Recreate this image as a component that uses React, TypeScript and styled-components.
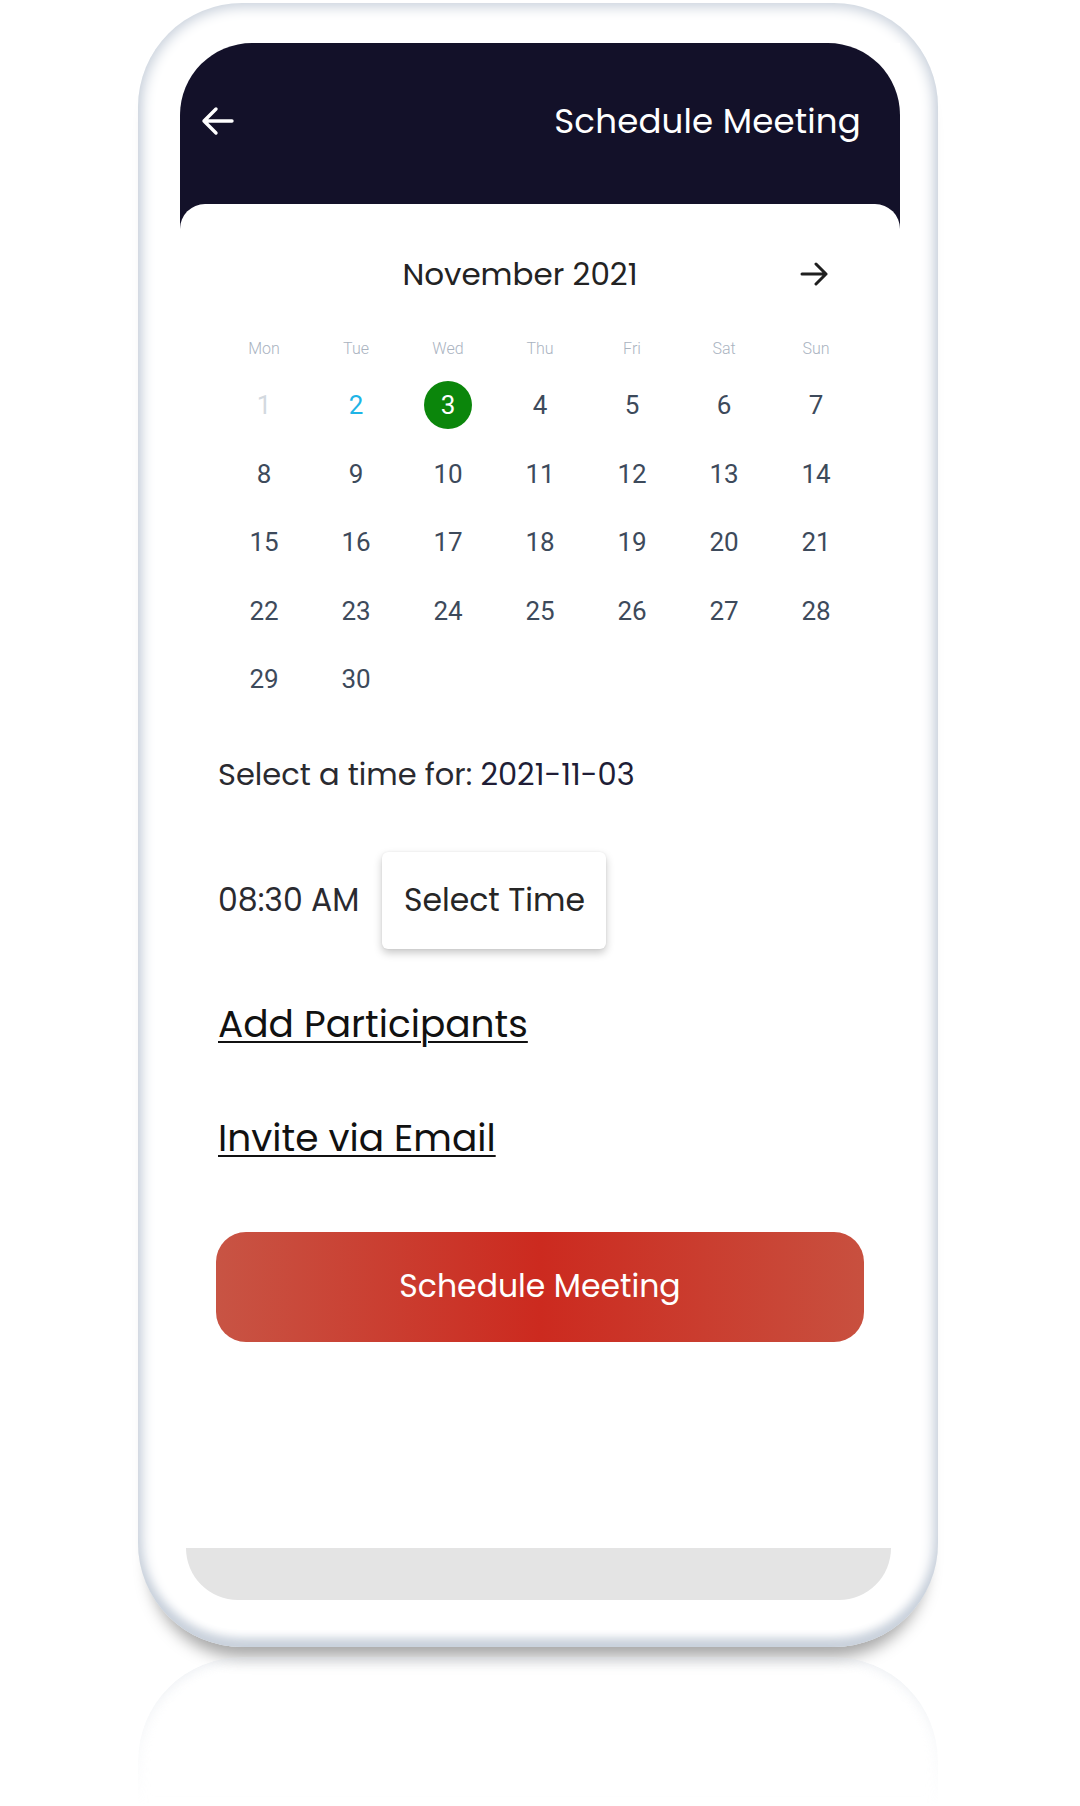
import React from 'react';
import styled, { createGlobalStyle } from 'styled-components';

const GlobalStyle = createGlobalStyle`
  html, body {
    margin: 0;
    padding: 0;
    background: #ffffff;
  }
  body {
    font-family: 'Poppins', 'Inter', 'Liberation Sans', sans-serif;
  }
  * {
    box-sizing: border-box;
  }
`;

const Page = styled.div`
  width: 1080px;
  height: 1806px;
  padding-top: 3px;
  overflow: hidden;
  background: #ffffff;
`;

const Phone = styled.div`
  width: 800px;
  height: 1644px;
  margin: 0 0 0 138px;
  padding: 40px 38px 47px 42px;
  border-radius: 104px;
  background: #ffffff;
  display: flex;
  flex-direction: column;
  box-shadow: inset 0 0 13px 4px #c8d0db, inset 0 -10px 10px -2px #cdd5df,
    0 22px 16px -12px rgba(0, 0, 0, 0.35);
`;

const Screen = styled.div`
  flex: 1;
  display: flex;
  flex-direction: column;
  background: #ffffff;
`;

const Header = styled.div`
  height: 186px;
  padding: 58px 39px 0 21px;
  display: flex;
  align-items: flex-start;
  justify-content: space-between;
  background: #131129;
  border-radius: 72px 72px 0 0;
`;

const HeaderRow = styled.div`
  height: 40px;
  display: flex;
  align-items: center;
`;

const Title = styled.h1`
  margin: 0;
  font-size: 34px;
  font-weight: 400;
  color: #ffffff;
  letter-spacing: 0.2px;
`;

const Card = styled.div`
  flex: 1;
  margin-top: -25px;
  padding: 0 38px;
  background: #ffffff;
  border-radius: 25px 25px 0 0;
  display: flex;
  flex-direction: column;
`;

const MonthRow = styled.div`
  height: 40px;
  margin-top: 50px;
  padding: 0 34px 0 22px;
  display: flex;
  align-items: center;
`;

const MonthLabel = styled.div`
  flex: 1;
  text-align: center;
  font-size: 31px;
  color: #232323;
`;

const WeekGrid = styled.div`
  display: grid;
  grid-template-columns: repeat(7, 92px);
  height: 30px;
  margin-top: 39px;
  align-items: center;
`;

const WeekDay = styled.div`
  text-align: center;
  font-family: 'Roboto', 'Inter', sans-serif;
  font-weight: 300;
  font-size: 16px;
  color: #aab3bf;
`;

const DateGrid = styled.div`
  display: grid;
  grid-template-columns: repeat(7, 92px);
  grid-auto-rows: 68.5px;
  margin-top: 8px;
`;

type DayKind = 'past' | 'today' | 'selected' | 'normal';

const dayColor: Record<DayKind, string> = {
  past: '#d3d9df',
  today: '#1eb4e6',
  selected: '#ffffff',
  normal: '#3d4a5b',
};

const DateCell = styled.div`
  display: flex;
  align-items: center;
  justify-content: center;
`;

const DayNumber = styled.span<{ $kind: DayKind }>`
  width: 48px;
  height: 48px;
  border-radius: 50%;
  display: flex;
  align-items: center;
  justify-content: center;
  font-family: 'Roboto', 'Inter', sans-serif;
  font-size: 26px;
  color: ${(p) => dayColor[p.$kind]};
  background: ${(p) => (p.$kind === 'selected' ? '#0b860b' : 'transparent')};
`;

const SelectLine = styled.p`
  margin: 43px 0 0;
  line-height: 36px;
  font-size: 30.5px;
  color: #2a2a30;
`;

const DateValue = styled.span`
  color: #201d36;
`;

const TimeRow = styled.div`
  margin-top: 59px;
  display: flex;
  align-items: center;
  gap: 23px;
`;

const TimeText = styled.span`
  font-size: 31.5px;
  color: #2a2a30;
`;

const SelectTimeButton = styled.button`
  width: 224px;
  height: 97px;
  border: none;
  border-radius: 6px;
  background: #ffffff;
  font-family: inherit;
  font-size: 31.5px;
  color: #262626;
  box-shadow: 0 4px 8px rgba(0, 0, 0, 0.22), 0 0 2px rgba(0, 0, 0, 0.08);
`;

const LinkText = styled.a<{ $top: number }>`
  display: block;
  width: fit-content;
  margin-top: ${(p) => p.$top}px;
  line-height: 44px;
  font-size: 37.5px;
  color: #111111;
  text-decoration: underline;
  text-decoration-thickness: 2px;
  text-underline-offset: 4px;
`;

const ScheduleButton = styled.button`
  width: 648px;
  height: 110px;
  margin: 72px 0 0 -2px;
  border: none;
  border-radius: 30px;
  background: linear-gradient(90deg, #c85444 0%, #cc2a1f 50%, #c8503f 100%);
  color: #ffffff;
  font-family: inherit;
  font-size: 31.5px;
`;

const BottomBar = styled.div`
  height: 52px;
  margin: 0 9px 0 6px;
  background: #e4e4e4;
  border-radius: 0 0 52px 52px;
`;

const Reflection = styled.div`
  width: 800px;
  height: 150px;
  margin: 10px 0 0 138px;
  border-radius: 104px 104px 0 0;
  box-shadow: inset 0 0 12px 3px #dde2e9;
  opacity: 0.55;
  -webkit-mask-image: linear-gradient(180deg, #000 0%, transparent 100%);
  mask-image: linear-gradient(180deg, #000 0%, transparent 100%);
`;

const weekDays = ['Mon', 'Tue', 'Wed', 'Thu', 'Fri', 'Sat', 'Sun'];

function kindOf(day: number): DayKind {
  if (day < 2) return 'past';
  if (day === 2) return 'today';
  if (day === 3) return 'selected';
  return 'normal';
}

function BackArrow() {
  return (
    <svg width="34" height="30" viewBox="0 0 34 30" fill="none">
      <path
        d="M3 15H31M15 3L3 15L15 27"
        stroke="#ffffff"
        strokeWidth="3.4"
        strokeLinecap="round"
        strokeLinejoin="round"
      />
    </svg>
  );
}

function NextArrow() {
  return (
    <svg width="28" height="24" viewBox="0 0 28 24" fill="none">
      <path
        d="M2 12H26M16 2L26 12L16 22"
        stroke="#1f1f1f"
        strokeWidth="3"
        strokeLinecap="round"
        strokeLinejoin="round"
      />
    </svg>
  );
}

function App() {
  const days = Array.from({ length: 30 }, (_, i) => i + 1);

  return (
    <Page>
      <GlobalStyle />
      <Phone>
        <Screen>
          <Header>
            <HeaderRow>
              <BackArrow />
            </HeaderRow>
            <HeaderRow>
              <Title>Schedule Meeting</Title>
            </HeaderRow>
          </Header>
          <Card>
            <MonthRow>
              <MonthLabel>November 2021</MonthLabel>
              <NextArrow />
            </MonthRow>
            <WeekGrid>
              {weekDays.map((d) => (
                <WeekDay key={d}>{d}</WeekDay>
              ))}
            </WeekGrid>
            <DateGrid>
              {days.map((d) => (
                <DateCell key={d}>
                  <DayNumber $kind={kindOf(d)}>{d}</DayNumber>
                </DateCell>
              ))}
            </DateGrid>
            <SelectLine>
              Select a time for: <DateValue>2021-11-03</DateValue>
            </SelectLine>
            <TimeRow>
              <TimeText>08:30 AM</TimeText>
              <SelectTimeButton>Select Time</SelectTimeButton>
            </TimeRow>
            <LinkText $top={53}>Add Participants</LinkText>
            <LinkText $top={70}>Invite via Email</LinkText>
            <ScheduleButton>Schedule Meeting</ScheduleButton>
          </Card>
          <BottomBar />
        </Screen>
      </Phone>
      <Reflection />
    </Page>
  );
}

export default App;
